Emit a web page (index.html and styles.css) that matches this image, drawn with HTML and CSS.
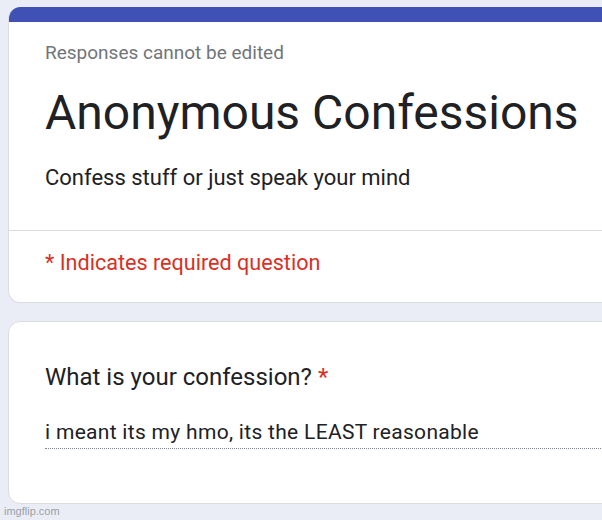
FILE: index.html
```html
<!DOCTYPE html>
<html>
<head>
<meta charset="utf-8">
<link rel="stylesheet" href="styles.css">
</head>
<body>
<div class="page">
  <div class="card header-card">
    <div class="bar"></div>
    <div class="head-main">
      <div class="note">Responses cannot be edited</div>
      <div class="title">Anonymous Confessions</div>
      <div class="desc">Confess stuff or just speak your mind</div>
    </div>
    <div class="divider"></div>
    <div class="required">* Indicates required question</div>
  </div>
  <div class="card question-card">
    <div class="question">What is your confession? <span class="star">*</span></div>
    <div class="answer">i meant its my hmo, its the LEAST reasonable</div>
  </div>
  <div class="watermark">imgflip.com</div>
</div>
</body>
</html>
```
FILE: styles.css
```css
html, body {
  margin: 0;
  padding: 0;
  background: #eaedf6;
  overflow: hidden;
  width: 602px;
  height: 520px;
  font-family: Roboto, "Noto Sans", sans-serif;
}
.page {
  position: relative;
  padding: 7px 0 0 8px;
  display: flex;
  flex-direction: column;
  gap: 18px;
}
.card {
  width: 640px;
  background: #fff;
  border: 1px solid #dadce0;
  border-radius: 12px;
  box-sizing: border-box;
  overflow: hidden;
}
.header-card {
  height: 296px;
  border-top: none;
}
.bar {
  height: 15px;
  background: #3f51b5;
}
.head-main {
  padding: 19px 36px 0;
}
.note {
  font-size: 19px;
  color: #70757a;
  line-height: 24px;
}
.title {
  font-size: 48px;
  color: #202124;
  line-height: 56px;
  margin-top: 20px;
}
.desc {
  font-size: 22px;
  color: #202124;
  line-height: 28px;
  margin-top: 23px;
}
.divider {
  height: 1px;
  background: #dadce0;
  margin-top: 38px;
}
.required {
  padding: 18px 36px 0;
  font-size: 21.6px;
  color: #d93025;
  line-height: 28px;
}
.question-card {
  height: 183px;
  padding: 40px 36px 0;
}
.question {
  font-size: 24px;
  color: #202124;
  line-height: 30px;
}
.star {
  color: #d93025;
}
.answer {
  margin-top: 27px;
  font-size: 21px;
  color: #202124;
  line-height: 26px;
  letter-spacing: 0.3px;
  border-bottom: 1px dotted #80868b;
  padding-bottom: 3px;
}
.watermark {
  position: absolute;
  left: 4px;
  top: 505px;
  font-size: 11px;
  color: #9aa0a6;
  font-family: "Liberation Sans", sans-serif;
}
```
